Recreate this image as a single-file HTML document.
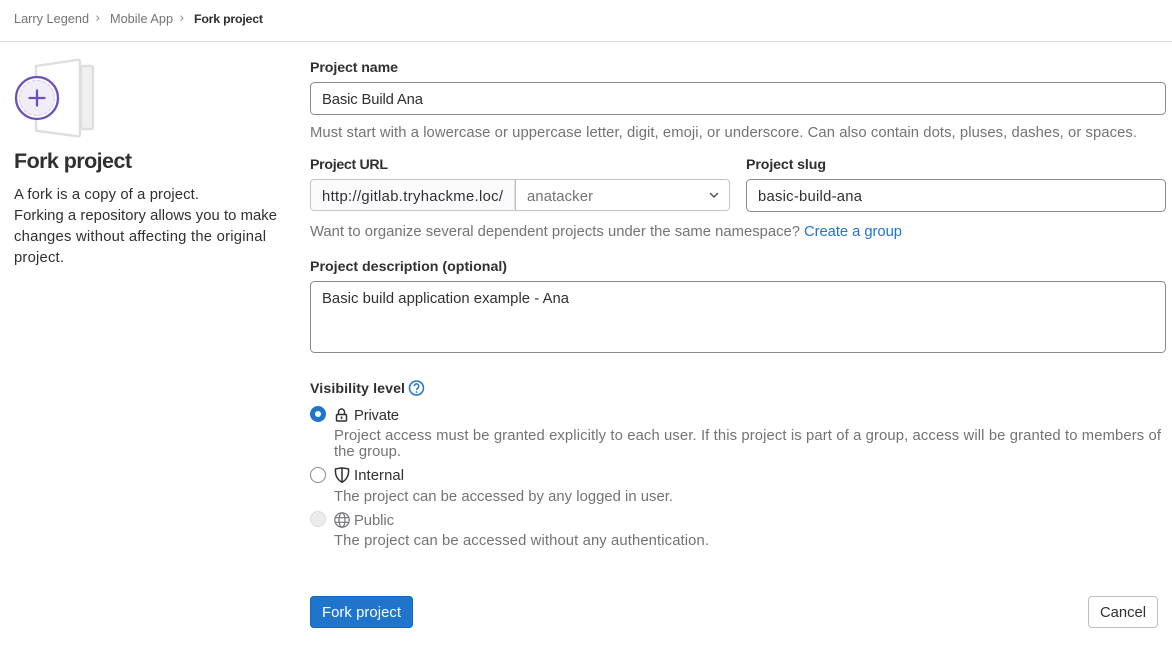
<!DOCTYPE html>
<html><head><meta charset="utf-8"><style>
html,body{margin:0;padding:0;background:#fff;width:1172px;height:646px;overflow:hidden}
svg{display:block}
text{font-family:"Liberation Sans",sans-serif;font-size:14.8px;fill:#303030}
.g{fill:#737278}.b{font-weight:bold;font-size:14.2px}
.br{font-size:12.7px;fill:#737278}
</style></head><body>
<svg width="1172" height="646" viewBox="0 0 1172 646" xmlns="http://www.w3.org/2000/svg">
<text class="br" x="14" y="23" textLength="75">Larry Legend</text>
<path d="M96.500 15.700l2.500 2.500-2.500 2.500M180.500 15.700l2.500 2.500-2.500 2.500" fill="none" stroke="#8c8b90" stroke-width="1"/>
<text class="br" x="110" y="23" textLength="63">Mobile App</text>
<text class="br b" style="fill:#303030;font-size:12.400px" x="194" y="23" textLength="69">Fork project</text>
<rect x="0" y="41" width="1172" height="1" fill="#dcdcde"/>

<rect x="81" y="66" width="12" height="63" rx="1.500" fill="#f0f0f0" stroke="#dedede" stroke-width="2.400"/>
<path d="M36 66L78 59.800q2-.2 2 2V134.500q0 2-2 1.800L38 131q-2-.2-2-2Z" fill="#fff" stroke="#dedede" stroke-width="2.400" stroke-linejoin="round"/>
<circle cx="37" cy="98" r="21" fill="#fff" stroke="#6b4fbb" stroke-width="2.300"/>
<circle cx="37" cy="98" r="17.500" fill="#f0edf9" stroke="#d4c9f0" stroke-width="1" stroke-dasharray="4 1.500"/>
<path d="M37 90.500V105.500M29.500 98H44.500" stroke="#6b4fbb" stroke-width="2.300" stroke-linecap="round"/>

<text class="b" style="font-size:21.500px" x="14" y="168" textLength="118">Fork project</text>
<text x="14" y="199" textLength="185">A fork is a copy of a project.</text>
<text x="14" y="220" textLength="263">Forking a repository allows you to make</text>
<text x="14" y="241" textLength="252">changes without affecting the original</text>
<text x="14" y="262" textLength="50">project.</text>

<text class="b" x="310" y="72" textLength="88">Project name</text>
<rect x="310.500" y="82.500" width="855" height="32" rx="4" fill="#fff" stroke="#89888d"/>
<text x="322" y="104" textLength="101">Basic Build Ana</text>
<text class="g" x="310" y="137" textLength="827">Must start with a lowercase or uppercase letter, digit, emoji, or underscore. Can also contain dots, pluses, dashes, or spaces.</text>

<text class="b" x="310" y="169" textLength="78">Project URL</text>
<path d="M515 179.500H314a3.500 3.500 0 0 0-3.500 3.500v24a3.500 3.500 0 0 0 3.500 3.500H515Z" fill="#fbfafd" stroke="#c4c4c7"/>
<path d="M515 179.500H726a3.500 3.500 0 0 1 3.500 3.500v24a3.500 3.500 0 0 1-3.500 3.500H515Z" fill="#fff" stroke="#c4c4c7"/>
<rect x="515" y="180" width="1" height="30" fill="#bfbfc3"/>
<text x="322" y="201" textLength="181">http://gitlab.tryhackme.loc/</text>
<text class="g" x="527" y="201" textLength="66">anatacker</text>
<path d="M710.500 193.500l3.500 3.500 3.500-3.500" fill="none" stroke="#535158" stroke-width="1.500" stroke-linecap="round" stroke-linejoin="round"/>

<text class="b" x="746" y="169" textLength="80">Project slug</text>
<rect x="746.500" y="179.500" width="419" height="32" rx="4" fill="#fff" stroke="#89888d"/>
<text x="758" y="201" textLength="104">basic-build-ana</text>

<text class="g" x="310" y="236" textLength="490">Want to organize several dependent projects under the same namespace?</text>
<text style="fill:#1f75cb" x="804" y="236" textLength="98">Create a group</text>

<text class="b" x="310" y="271" textLength="197">Project description (optional)</text>
<rect x="310.500" y="281.500" width="855" height="71" rx="4" fill="#fff" stroke="#89888d"/>
<text x="322" y="303" textLength="247">Basic build application example - Ana</text>

<text class="b" x="310" y="393" textLength="95">Visibility level</text>
<circle cx="416.500" cy="388" r="7" fill="none" stroke="#1f75cb" stroke-width="1.500"/>
<path d="M414.200 386.200a2.300 2.300 0 1 1 3.600 1.900c-.8.500-1.300 1-1.300 1.900" fill="none" stroke="#1f75cb" stroke-width="1.400"/>
<circle cx="416.500" cy="392" r=".9" fill="#1f75cb"/>

<circle cx="318" cy="414" r="8" fill="#1f75cb"/>
<circle cx="318" cy="414" r="3" fill="#fff"/>
<rect x="336.500" y="414.500" width="10" height="6.500" rx="1" fill="none" stroke="#303030" stroke-width="1.500"/>
<path d="M338.500 414.500v-2.500a3 3 0 0 1 6 0v2.500" fill="none" stroke="#303030" stroke-width="1.500"/>
<rect x="340.700" y="416.500" width="1.600" height="2.500" fill="#303030"/>
<text x="354" y="420" textLength="45">Private</text>
<text class="g" x="334" y="440" textLength="827">Project access must be granted explicitly to each user. If this project is part of a group, access will be granted to members of</text>
<text class="g" x="334" y="456" textLength="67">the group.</text>

<circle cx="318" cy="475" r="7.500" fill="#fff" stroke="#89888d"/>
<path d="M335.500 469C338 468.400 340 468 342 468C344 468 346 468.400 348.500 469C349 474.500 347 479.500 342 482.300C337 479.500 335 474.500 335.500 469Z" fill="none" stroke="#303030" stroke-width="1.500" stroke-linejoin="round"/>
<path d="M342 468V482" stroke="#303030" stroke-width="1.500"/>
<text x="354" y="480" textLength="50">Internal</text>
<text class="g" x="334" y="501" textLength="339">The project can be accessed by any logged in user.</text>

<circle cx="318" cy="519" r="7.500" fill="#ececef" stroke="#dcdcde"/>
<g fill="none" stroke="#737278" stroke-width="1.200">
<circle cx="342" cy="520" r="7.200"/><ellipse cx="342" cy="520" rx="3" ry="7.200"/><path d="M335.500 517.700H348.500M335.500 522.300H348.500"/>
</g>
<text class="g" x="354" y="525" textLength="40">Public</text>
<text class="g" x="334" y="545" textLength="375">The project can be accessed without any authentication.</text>

<rect x="310" y="596" width="103" height="32" rx="4" fill="#1f75cb"/>
<rect x="310.500" y="596.500" width="102" height="31" rx="3.500" fill="none" stroke="#1068bf"/>
<text style="fill:#fff" x="322" y="617" textLength="79">Fork project</text>
<rect x="1088.500" y="596.500" width="69" height="31" rx="3.500" fill="#fff" stroke="#bfbfc3"/>
<text x="1100" y="617" textLength="46">Cancel</text>
</svg>
</body></html>
